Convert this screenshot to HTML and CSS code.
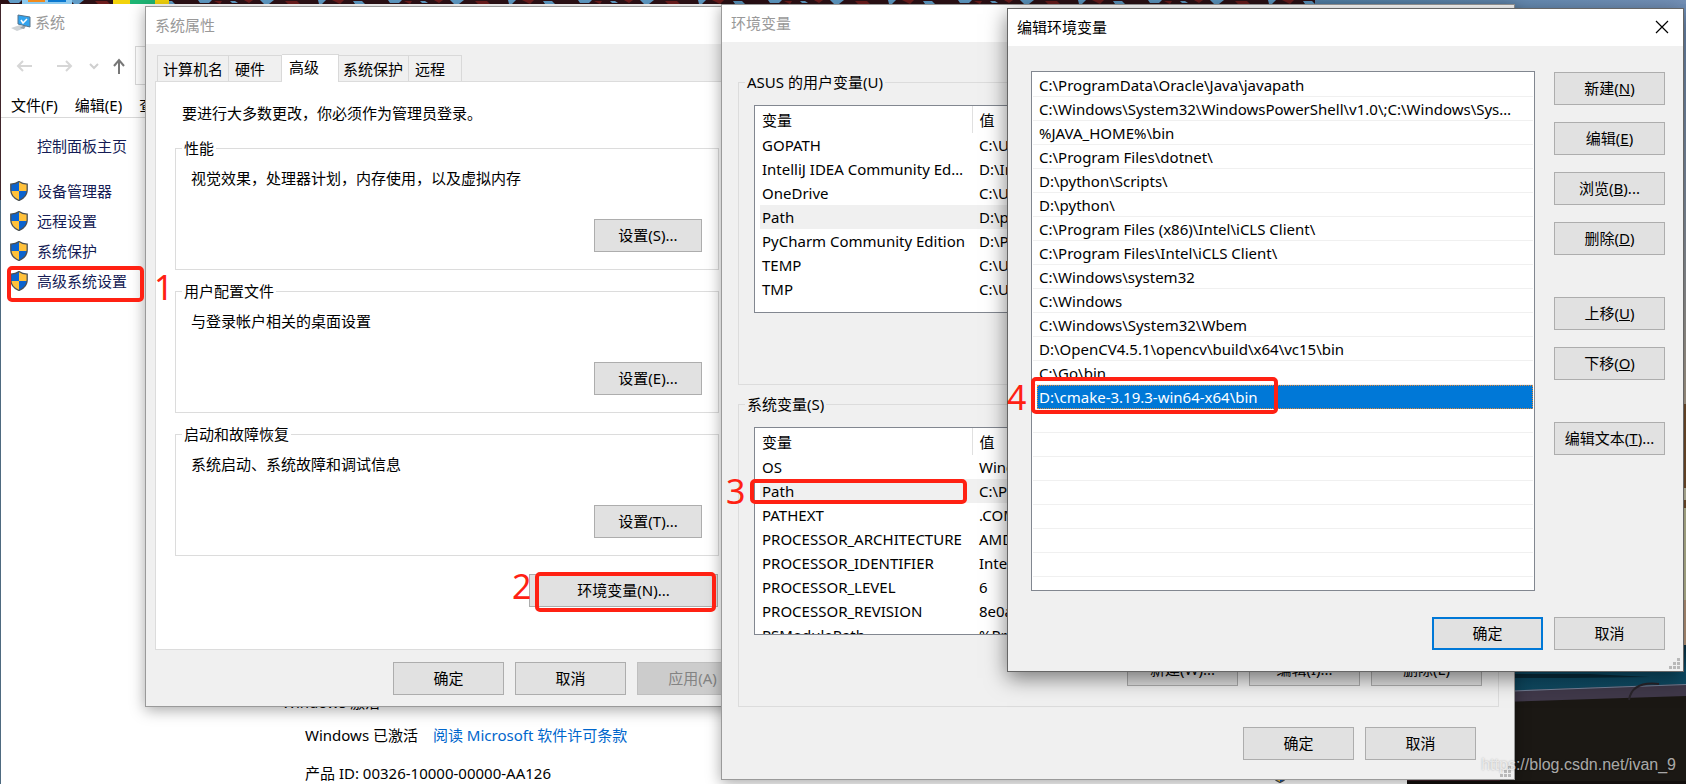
FILE: index.html
```html
<!DOCTYPE html>
<html lang="zh-CN">
<head>
    <meta charset="UTF-8">
    <meta name="viewport" content="width=device-width, initial-scale=1.0">
    <title>编辑环境变量</title>
    <link rel="stylesheet" href="styles.css">
</head>
<body>
<svg class="defs" aria-hidden="true">
    <symbol id="shield" viewBox="0 0 18 20">
        <path d="M9 .6C6.500 2.600 3.500 3.200.8 3.200V9c0 5 3.500 8.500 8.200 10.500C13.700 17.500 17.200 14 17.200 9V3.200C14.500 3.200 11.500 2.600 9 .6z" fill="#ffc13b"/>
        <path d="M9 .6C6.500 2.600 3.500 3.200.8 3.200V10H9z" fill="#0b63ce"/>
        <path d="M9 10h8.200c-.5 4.500-3.800 7.700-8.200 9.500z" fill="#0b63ce"/>
        <path d="M9 .6C6.500 2.600 3.500 3.200.8 3.200V9c0 5 3.500 8.500 8.200 10.500C13.700 17.500 17.200 14 17.200 9V3.200C14.500 3.200 11.500 2.600 9 .6z" fill="none" stroke="#4b5054" stroke-width="1.300"/>
    </symbol>
    <symbol id="grip" viewBox="0 0 11 11">
        <path d="M8 0h3v3H8zM8 4h3v3H8zM4 4h3v3H4zM8 8h3v3H8zM4 8h3v3H4zM0 8h3v3H0z" fill="#b9b9b9"/>
    </symbol>
</svg>

<div class="desktop">
    <!-- 桌面背景 -->
    <svg class="wallpaper" viewBox="0 0 1686 784" preserveAspectRatio="none" aria-hidden="true">
        <defs>
            <linearGradient id="sky" x1="0" x2="1" y1="0" y2="0">
                <stop offset="0" stop-color="#5484ac"/>
                <stop offset="1" stop-color="#7592b9"/>
            </linearGradient>
            <linearGradient id="edge" x1="0" x2="0" y1="0" y2="1">
                <stop offset="0" stop-color="#6f8fb8"/>
                <stop offset=".5" stop-color="#8d9bad"/>
                <stop offset="1" stop-color="#b9ab98"/>
            </linearGradient>
            <linearGradient id="sea" x1="0" x2="0" y1="0" y2="1">
                <stop offset="0" stop-color="#0a3346"/>
                <stop offset=".5" stop-color="#0c5270"/>
                <stop offset="1" stop-color="#10465c"/>
            </linearGradient>
            <pattern id="leaves" width="190" height="5" patternUnits="userSpaceOnUse">
                <rect width="190" height="5" fill="#2c1116"/>
                <path d="M8 0h14l-3 3h-9zM40 1h5l3 2H42zM70 0h14l-5 4H74zM128 0h8l-4 4h-3zM163 1h9l3 3h-10z" fill="#5f9bc6"/>
                <path d="M24 1h8l-2 3zM54 0h9l-4 3zM95 1h12l3 3H98zM142 0h12l-4 4z" fill="#6d1d1d"/>
            </pattern>
        </defs>
        <rect width="1686" height="784" fill="#40252b"/>
        <rect y="200" width="4" height="584" fill="#4e6a80"/>
        <rect width="1320" height="5" fill="url(#leaves)"/>
        <rect x="1315" width="371" height="12" fill="url(#sky)"/>
        <rect x="22" width="50" height="4" fill="#8cc9ee"/>
        <rect x="28" width="17" height="2" fill="#f08a1c"/>
        <rect x="48" width="18" height="2" fill="#0a78d0"/>
        <rect x="113" width="56" height="4" fill="#f2d30c"/>
        <rect x="130" width="25" height="4" fill="#1eb574"/>
        <rect x="1680" y="4" width="6" height="400" fill="url(#edge)"/>
        <rect x="1680" y="404" width="6" height="104" fill="#7c5430"/>
        <rect x="1680" y="488" width="6" height="12" fill="#d0cdb0"/>
        <rect x="1680" y="508" width="6" height="140" fill="#c9c9a0"/>
        <rect x="1680" y="600" width="6" height="48" fill="#c6a184"/>
        <path d="M1500 645h186v41l-186 7z" fill="url(#sea)"/>
        <path d="M1510 674h80l60 3-80 1h-60z" fill="#082c3c"/>
        <path d="M1500 691l186-7v13l-186 6z" fill="#40394a"/>
        <path d="M1500 691l186-7v1l-186 7z" fill="#75839a"/>
        <path d="M1500 702l186-6v88h-186z" fill="#1b1814"/>
        <path d="M1629 700q3-19 30-16" fill="none" stroke="#29242a" stroke-width="2"/>
        <rect x="1400" y="781" width="286" height="3" fill="#120f0d"/>
    </svg>

    <!-- 系统 -->
    <section class="window system">
        <header class="system-title">
            <svg class="pc-icon" viewBox="0 0 20 18" aria-hidden="true">
                <path d="M0 14l9-3 5 3-8 3z" fill="#cfd3d6"/>
                <path d="M9 14l4-3 2 1-2 3z" fill="#9aa3aa"/>
                <path d="M7 1l12 2v10L7 10z" fill="#31a3ee" stroke="#56738a"/>
                <path d="M10 6l2 3 4-4" fill="none" stroke="#fff" stroke-width="1.500"/>
            </svg>
            <span>系统</span>
        </header>
        <nav class="toolbar">
            <svg class="nav-icons" viewBox="0 0 112 18" aria-hidden="true">
                <g fill="none" stroke-width="2">
                    <path d="M17 9H3M8 4L3 9l5 5M42 9h14M51 4l5 5-5 5" stroke="#d6d6d6"/>
                    <path d="M75 7l4 4 4-4" stroke="#cfcfcf"/>
                    <path d="M104 17V3M99 9l5-6 5 6" stroke="#777"/>
                </g>
            </svg>
            <div class="address"></div>
        </nav>
        <div class="menubar">
            <span>文件(F)</span>
            <span>编辑(E)</span>
            <span>查看(V)</span>
        </div>
        <div class="sidebar">
            <a href="#" class="home">控制面板主页</a>
            <a href="#"><svg class="shield"><use href="#shield"/></svg>设备管理器</a>
            <a href="#"><svg class="shield"><use href="#shield"/></svg>远程设置</a>
            <a href="#"><svg class="shield"><use href="#shield"/></svg>系统保护</a>
            <a href="#"><svg class="shield"><use href="#shield"/></svg>高级系统设置</a>
        </div>
        <div class="activation">
            <h2>Windows 激活</h2>
            <p>Windows 已激活<a href="#">阅读 Microsoft 软件许可条款</a></p>
            <p>产品 ID: 00326-10000-00000-AA126 <svg class="shield"><use href="#shield"/></svg></p>
        </div>
    </section>

    <!-- 系统属性 -->
    <section class="window dialog properties">
        <header class="title inactive">系统属性</header>
        <div class="tabs" role="tablist">
            <button type="button" role="tab">计算机名</button>
            <button type="button" role="tab">硬件</button>
            <button type="button" role="tab" class="active" aria-selected="true">高级</button>
            <button type="button" role="tab">系统保护</button>
            <button type="button" role="tab">远程</button>
        </div>
        <div class="panel">
            <p>要进行大多数更改，你必须作为管理员登录。</p>
            <fieldset>
                <legend>性能</legend>
                <p>视觉效果，处理器计划，内存使用，以及虚拟内存</p>
                <button type="button" class="btn">设置(S)...</button>
            </fieldset>
            <fieldset>
                <legend>用户配置文件</legend>
                <p>与登录帐户相关的桌面设置</p>
                <button type="button" class="btn">设置(E)...</button>
            </fieldset>
            <fieldset>
                <legend>启动和故障恢复</legend>
                <p>系统启动、系统故障和调试信息</p>
                <button type="button" class="btn">设置(T)...</button>
            </fieldset>
            <button type="button" class="btn env-btn">环境变量(N)...</button>
        </div>
        <footer class="buttons">
            <button type="button" class="btn">确定</button>
            <button type="button" class="btn">取消</button>
            <button type="button" class="btn" disabled>应用(A)</button>
        </footer>
    </section>

    <!-- 环境变量 -->
    <section class="window dialog variables">
        <header class="title inactive">环境变量</header>
        <fieldset class="user-vars">
            <legend>ASUS 的用户变量(U)</legend>
            <div class="list">
                <table>
                    <thead><tr><th>变量</th><th>值</th></tr></thead>
                    <tbody>
                        <tr><td>GOPATH</td><td>C:\Users</td></tr>
                        <tr><td>IntelliJ IDEA Community Edition</td><td>D:\IntelliJ</td></tr>
                        <tr><td>OneDrive</td><td>C:\Users</td></tr>
                        <tr class="current"><td>Path</td><td>D:\python</td></tr>
                        <tr><td>PyCharm Community Edition</td><td>D:\PyCharm</td></tr>
                        <tr><td>TEMP</td><td>C:\Users</td></tr>
                        <tr><td>TMP</td><td>C:\Users</td></tr>
                    </tbody>
                </table>
            </div>
        </fieldset>
        <fieldset>
            <legend>系统变量(S)</legend>
            <div class="list">
                <table>
                    <thead><tr><th>变量</th><th>值</th></tr></thead>
                    <tbody>
                        <tr><td>OS</td><td>Windows_NT</td></tr>
                        <tr class="current"><td>Path</td><td>C:\Program</td></tr>
                        <tr><td>PATHEXT</td><td>.COM;.EXE</td></tr>
                        <tr><td>PROCESSOR_ARCHITECTURE</td><td>AMD64</td></tr>
                        <tr><td>PROCESSOR_IDENTIFIER</td><td>Intel64</td></tr>
                        <tr><td>PROCESSOR_LEVEL</td><td>6</td></tr>
                        <tr><td>PROCESSOR_REVISION</td><td>8e0a</td></tr>
                        <tr><td>PSModulePath</td><td>%Program</td></tr>
                    </tbody>
                </table>
            </div>
            <div class="buttons">
                <button type="button" class="btn">新建(W)...</button>
                <button type="button" class="btn">编辑(I)...</button>
                <button type="button" class="btn">删除(L)</button>
            </div>
        </fieldset>
        <footer class="buttons">
            <button type="button" class="btn">确定</button>
            <button type="button" class="btn">取消</button>
        </footer>
        <svg class="grip"><use href="#grip"/></svg>
    </section>

    <!-- 编辑环境变量 -->
    <section class="window dialog edit">
        <header class="title">编辑环境变量
            <button type="button" class="close" aria-label="关闭">
                <svg viewBox="0 0 14 14"><path d="M1 1l12 12M13 1L1 13" stroke="#000" stroke-width="1.200"/></svg>
            </button>
        </header>
        <div class="edit-body">
            <ul class="list paths">
                <li>C:\ProgramData\Oracle\Java\javapath</li>
                <li>C:\Windows\System32\WindowsPowerShell\v1.0\;C:\Windows\System32</li>
                <li>%JAVA_HOME%\bin</li>
                <li>C:\Program Files\dotnet\</li>
                <li>D:\python\Scripts\</li>
                <li>D:\python\</li>
                <li>C:\Program Files (x86)\Intel\iCLS Client\</li>
                <li>C:\Program Files\Intel\iCLS Client\</li>
                <li>C:\Windows\system32</li>
                <li>C:\Windows</li>
                <li>C:\Windows\System32\Wbem</li>
                <li>D:\OpenCV4.5.1\opencv\build\x64\vc15\bin</li>
                <li>C:\Go\bin</li>
                <li class="selected">D:\cmake-3.19.3-win64-x64\bin</li>
                <li></li>
                <li></li>
                <li></li>
                <li></li>
                <li></li>
                <li></li>
                <li></li>
            </ul>
            <div class="side-buttons">
                <button type="button" class="btn">新建(<u>N</u>)</button>
                <button type="button" class="btn">编辑(<u>E</u>)</button>
                <button type="button" class="btn">浏览(<u>B</u>)...</button>
                <button type="button" class="btn">删除(<u>D</u>)</button>
                <button type="button" class="btn spaced">上移(<u>U</u>)</button>
                <button type="button" class="btn">下移(<u>O</u>)</button>
                <button type="button" class="btn spaced">编辑文本(<u>T</u>)...</button>
            </div>
        </div>
        <footer class="buttons">
            <button type="button" class="btn default">确定</button>
            <button type="button" class="btn">取消</button>
        </footer>
        <svg class="grip"><use href="#grip"/></svg>
    </section>

    <!-- 步骤标注 -->
    <div class="mark mark-1"></div><span class="step step-1">1</span>
    <div class="mark mark-2"></div><span class="step step-2">2</span>
    <div class="mark mark-3"></div><span class="step step-3">3</span>
    <div class="mark mark-4"></div><span class="step step-4">4</span>

    <div class="watermark">https://blog.csdn.net/ivan_9</div>
</div>
</body>
</html>
```
FILE: styles.css
```css
* {
    box-sizing: border-box;
}

body {
    margin: 0;
    font-family: "Noto Sans", "Noto Sans CJK SC", sans-serif;
    font-size: 15px;
    line-height: 20px;
    color: #000;
}

button {
    font: inherit;
    color: inherit;
    padding: 0;
    white-space: nowrap;
}

p {
    margin: 0;
}

.defs {
    position: absolute;
    width: 0;
    height: 0;
}

.desktop {
    position: relative;
    height: 100vh;
    overflow: hidden;
}

.wallpaper {
    position: absolute;
    width: 100%;
    height: 100%;
}

.window {
    position: absolute;
}

.shield {
    width: 18px;
    height: 20px;
    flex: none;
}

/* 系统窗口 */
.system {
    left: 1px;
    right: 279px;
    top: 4px;
    bottom: 0;
    display: flex;
    flex-direction: column;
    background: #fff;
}

.system-title {
    display: flex;
    gap: 4px;
    padding: 8px 10px 0;
    color: #999;
}

.pc-icon {
    width: 20px;
    height: 18px;
    margin-top: 2px;
}

.toolbar {
    display: flex;
    align-items: center;
    gap: 8px;
    margin-top: 14px;
    padding-left: 14px;
}

.nav-icons {
    width: 112px;
    height: 18px;
}

.address {
    flex: 1;
    height: 39px;
    border: 1px solid #d9d9d9;
}

.menubar {
    display: flex;
    gap: 17px;
    margin-top: 10px;
    padding: 0 10px 2px;
    border-bottom: 1px solid #d9d9d9;
}

.sidebar {
    display: flex;
    flex-direction: column;
    gap: 10px;
    padding: 18px 9px;
}

.sidebar a {
    display: flex;
    gap: 9px;
    color: #151c55;
    text-decoration: none;
}

.sidebar .home {
    padding-left: 27px;
    margin-bottom: 15px;
}

.activation {
    margin-top: auto;
    padding: 0 118px 1px 281px;
}

.activation h2 {
    margin: 0 0 13px;
    font-size: 15px;
    font-weight: normal;
}

.activation p {
    display: flex;
    justify-content: space-between;
    padding-left: 23px;
}

.activation p:nth-child(2) {
    justify-content: flex-start;
    gap: 15px;
    margin-bottom: 18px;
}

.activation a {
    color: #0066cc;
    text-decoration: none;
}

/* 对话框 */
.dialog {
    background: #f0f0f0;
    border: 1px solid #9a9a9a;
    box-shadow: 0 3px 14px rgba(0, 0, 0, 0.35);
}

.title {
    display: flex;
    align-items: center;
    justify-content: space-between;
    height: 37px;
    padding: 0 14px 2px 9px;
    background: #fff;
}

.title.inactive {
    color: #999;
}

.close {
    border: 0;
    background: none;
}

.close svg {
    display: block;
    width: 14px;
    height: 14px;
}

.btn {
    width: 111px;
    height: 33px;
    padding-bottom: 2px;
    background: #e1e1e1;
    border: 1px solid #adadad;
}

.btn.default {
    border: 2px solid #0078d7;
}

.btn:disabled {
    background: #ccc;
    border-color: #bfbfbf;
    color: #838383;
}

.buttons {
    display: flex;
    justify-content: flex-end;
    gap: 11px;
}

fieldset {
    margin: 0;
    min-width: 0;
    border: 1px solid #dcdcdc;
}

legend {
    padding: 0 2px;
}

.list {
    overflow: hidden;
    background: #fff;
    border: 1px solid #828790;
}

.grip {
    position: absolute;
    right: 3px;
    bottom: 2px;
    width: 11px;
    height: 11px;
}

/* 系统属性 */
.properties {
    left: 145px;
    top: 6px;
    width: 612px;
}

.tabs {
    display: flex;
    align-items: flex-end;
    margin: 10px 0 0 11px;
}

.tabs button {
    height: 26px;
    padding: 0 16px 0 6px;
    border: 1px solid #d9d9d9;
    border-left-width: 0;
    border-bottom: 0;
    background: #f0f0f0;
}

.tabs button:first-child {
    padding: 0 5px;
    border-left-width: 1px;
}

.tabs button:nth-child(4) {
    padding: 0 5px 0 4px;
}

.tabs .active {
    position: relative;
    height: 28px;
    margin-bottom: -1px;
    padding: 0 19px 4px 7px;
    background: #fff;
}

.panel {
    display: flex;
    flex-direction: column;
    gap: 11px;
    margin: 0 9px 0 9px;
    padding: 21px 27px 42px 19px;
    background: #fff;
    border: 1px solid #dcdcdc;
}

.panel > p {
    margin: 0 0 4px 7px;
}

.panel fieldset {
    display: flex;
    flex-direction: column;
    padding: 10px 16px 17px 6px;
}

.panel fieldset p {
    margin: 0 0 31px 9px;
}

.panel fieldset .btn {
    width: 108px;
    align-self: flex-end;
}

.panel .env-btn {
    width: 189px;
    margin: 7px 1px 0 0;
    align-self: flex-end;
}

.properties footer {
    padding: 12px 8px 11px;
}

/* 环境变量 */
.variables {
    left: 721px;
    top: 4px;
    width: 794px;
}

.variables fieldset {
    margin: 30px 15px 0 16px;
    padding: 13px 16px 20px 6px;
}

.variables .user-vars {
    padding-bottom: 71px;
}

.variables fieldset + fieldset {
    margin-top: 9px;
}

.variables .list {
    height: 208px;
    margin-left: 9px;
    padding-left: 5px;
}

.variables fieldset .buttons {
    margin-top: 18px;
}

.variables footer {
    padding: 20px 38px 19px;
}

table {
    width: 100%;
    table-layout: fixed;
    border-collapse: collapse;
}

th {
    height: 27px;
    padding: 0 2px;
    font-weight: normal;
    text-align: left;
}

th:first-child {
    width: 212px;
    border-right: 1px solid #e0e0e0;
}

td {
    height: 24px;
    padding: 0 6px 0 2px;
    overflow: hidden;
    white-space: nowrap;
    text-overflow: ellipsis;
}

th:last-child,
td:last-child {
    padding-left: 7px;
}

.current {
    background: #f0f0f0;
}

/* 编辑环境变量 */
.edit {
    right: 2px;
    top: 8px;
    width: 677px;
    border-color: #666;
    box-shadow: 0 6px 20px rgba(0, 0, 0, 0.5);
}

.edit-body {
    display: flex;
    gap: 19px;
    padding: 25px 18px 0 23px;
}

.paths {
    flex: 1;
    min-width: 0;
    height: 520px;
    margin: 0;
    padding: 1px;
    list-style: none;
}

.paths li {
    height: 24px;
    padding: 2px 20px 2px 6px;
    line-height: 20px;
    overflow: hidden;
    white-space: nowrap;
    text-overflow: ellipsis;
    border-bottom: 1px solid #f0f0f0;
}

.paths .selected {
    margin-left: 4px;
    padding: 1px 1px;
    background: #0078d7;
    color: #fff;
    border: 1px dotted #e08a3c;
}

.side-buttons {
    display: flex;
    flex-direction: column;
    gap: 17px;
    padding-top: 1px;
}

.side-buttons .spaced {
    margin-top: 25px;
}

.edit footer {
    padding: 26px 18px 21px;
}

/* 红框与序号 */
.mark {
    position: absolute;
    border: 4px solid #ff2113;
    border-radius: 5px;
}

.mark-1 {
    left: 7px;
    top: 266px;
    width: 137px;
    height: 36px;
}

.mark-2 {
    left: 535px;
    top: 572px;
    width: 181px;
    height: 40px;
}

.mark-3 {
    left: 750px;
    top: 479px;
    width: 217px;
    height: 25px;
}

.mark-4 {
    left: 1031px;
    top: 377px;
    width: 247px;
    height: 37px;
}

.step {
    position: absolute;
    font-size: 34px;
    line-height: 40px;
    color: #ff2113;
}

.step-1 {
    left: 154px;
    top: 267px;
}

.step-2 {
    left: 512px;
    top: 566px;
}

.step-3 {
    left: 726px;
    top: 471px;
}

.step-4 {
    left: 1007px;
    top: 377px;
}

.watermark {
    position: absolute;
    right: 10px;
    bottom: 9px;
    font-family: "Liberation Sans", Arial, sans-serif;
    font-size: 16px;
    color: rgba(255, 255, 255, 0.65);
    text-shadow: 0 0 2px rgba(0, 0, 0, 0.3);
}
```
